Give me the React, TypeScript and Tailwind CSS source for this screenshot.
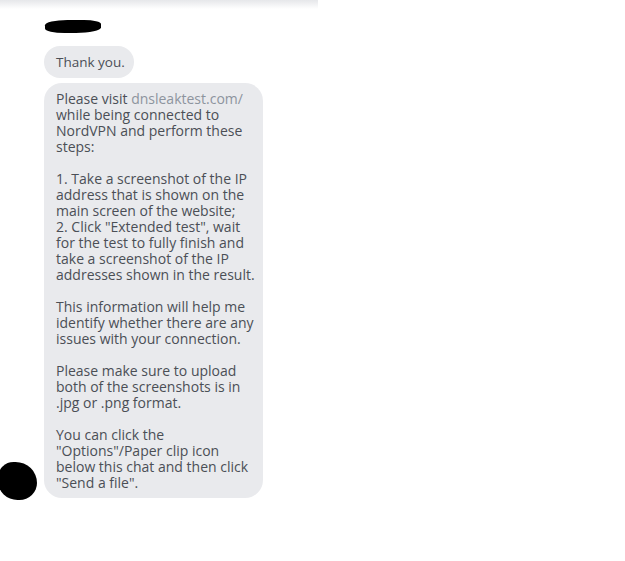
const lines: (string | null)[] = [
  "while being connected to",
  "NordVPN and perform these",
  "steps:",
  null,
  "1. Take a screenshot of the IP",
  "address that is shown on the",
  "main screen of the website;",
  '2. Click "Extended test", wait',
  "for the test to fully finish and",
  "take a screenshot of the IP",
  "addresses shown in the result.",
  null,
  "This information will help me",
  "identify whether there are any",
  "issues with your connection.",
  null,
  "Please make sure to upload",
  "both of the screenshots is in",
  ".jpg or .png format.",
  null,
  "You can click the",
  '"Options"/Paper clip icon',
  "below this chat and then click",
  '"Send a file".',
]

export default function App() {
  return (
    <div
      className="relative h-[561px] w-[625px] overflow-hidden bg-white text-[#4b4f56]"
      style={{ fontFamily: '"Open Sans", "Noto Sans", sans-serif' }}
    >
      {/* faded header edge */}
      <div className="h-[9px] w-[318px] bg-gradient-to-b from-[#e6e7ea] to-white" />

      <div className="flex flex-col pl-[44px] pt-[11px]">
        {/* redacted sender name */}
        <div className="ml-[1px] h-[13px] w-[56px] rounded-[40%_30%_45%_35%] bg-black" />

        <div className="mt-[13px] flex h-[32px] w-[90px] items-center whitespace-nowrap rounded-full bg-[#e9eaed] pl-3 text-[13.5px]">
          Thank you.
        </div>

        <div className="mt-[5px] w-[219px] rounded-[18px] bg-[#e9eaed] px-3 pb-[7px] pt-[8px] text-[14px] leading-[16px] whitespace-nowrap">
          <div>
            Please visit <span className="text-[#8d949e]">dnsleaktest.com/</span>
          </div>
          {lines.map((l, i) =>
            l === null ? <div key={i} className="h-[16px]" /> : <div key={i}>{l}</div>
          )}
        </div>
      </div>

      {/* redacted avatar */}
      <div className="absolute left-[-2px] top-[462px] h-[38px] w-[39px] rounded-[40%_55%_45%_50%] bg-black" />
    </div>
  )
}
